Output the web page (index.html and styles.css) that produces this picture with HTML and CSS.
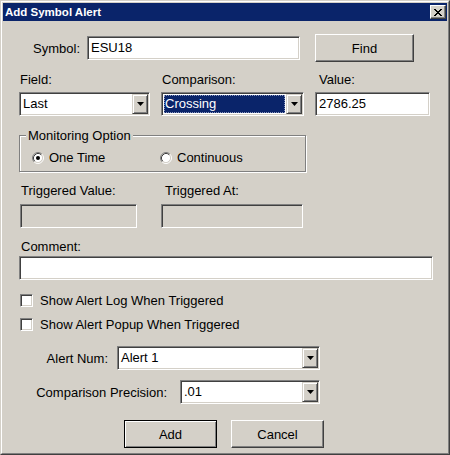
FILE: index.html
```html
<!DOCTYPE html>
<html>
<head>
<meta charset="utf-8">
<link rel="stylesheet" href="styles.css">
</head>
<body>
<div class="window">
  <div class="frame">
    <div class="titlebar">
      <span class="title">Add Symbol Alert</span>
      <span class="close"><svg width="8" height="7" viewBox="0 0 8 7" shape-rendering="crispEdges"><path d="M0 0h2v1H0zM6 0h2v1H6zM1 1h2v1H1zM5 1h2v1H5zM2 2h4v1H2zM3 3h2v1H3zM2 4h4v1H2zM1 5h2v1H1zM5 5h2v1H5zM0 6h2v1H0zM6 6h2v1H6z" fill="#000"/></svg></span>
    </div>
    <div class="content">
      <div class="row sym-row">
        <span class="lbl sym-lbl">Symbol:</span>
        <div class="edit sym-edit">ESU18</div>
        <div class="btn find">Find</div>
      </div>

      <div class="grid3">
        <span class="cap c1">Field:</span>
        <span class="cap c1">Comparison:</span>
        <span class="cap c4">Value:</span>
        <div class="combo"><span class="val">Last</span><span class="drop"><svg width="7" height="4" viewBox="0 0 7 4"><path d="M0 0h7L3.5 4z" fill="#000"/></svg></span></div>
        <div class="combo"><span class="val sel">Crossing</span><span class="drop"><svg width="7" height="4" viewBox="0 0 7 4"><path d="M0 0h7L3.5 4z" fill="#000"/></svg></span></div>
        <div class="edit">2786.25</div>
      </div>

      <fieldset class="group">
        <legend>Monitoring Option</legend>
        <div class="radios">
          <span class="radio first"><svg width="12" height="12" viewBox="0 0 12 12"><circle cx="6" cy="6" r="4.5" fill="#fff"/><path d="M2.11 9.89A5.5 5.5 0 0 1 9.89 2.11" stroke="#808080" fill="none"/><path d="M9.89 2.11A5.5 5.5 0 0 1 2.11 9.89" stroke="#fff" fill="none"/><path d="M2.82 9.18A4.5 4.5 0 0 1 9.18 2.82" stroke="#404040" fill="none"/><path d="M9.18 2.82A4.5 4.5 0 0 1 2.82 9.18" stroke="#d4d0c8" fill="none"/><circle cx="6" cy="6" r="2" fill="#000"/></svg>One Time</span>
          <span class="radio"><svg width="12" height="12" viewBox="0 0 12 12"><circle cx="6" cy="6" r="4.5" fill="#fff"/><path d="M2.11 9.89A5.5 5.5 0 0 1 9.89 2.11" stroke="#808080" fill="none"/><path d="M9.89 2.11A5.5 5.5 0 0 1 2.11 9.89" stroke="#fff" fill="none"/><path d="M2.82 9.18A4.5 4.5 0 0 1 9.18 2.82" stroke="#404040" fill="none"/><path d="M9.18 2.82A4.5 4.5 0 0 1 2.82 9.18" stroke="#d4d0c8" fill="none"/></svg>Continuous</span>
        </div>
      </fieldset>

      <div class="grid2">
        <span class="cap c1">Triggered Value:</span>
        <span class="cap c4">Triggered At:</span>
        <div class="edit disabled"></div>
        <div class="edit disabled"></div>
      </div>

      <span class="cap comment-cap">Comment:</span>
      <div class="edit comment"></div>

      <div class="check first-check"><span class="box"></span>Show Alert Log When Triggered</div>
      <div class="check second-check"><span class="box"></span>Show Alert Popup When Triggered</div>

      <div class="row alert-row">
        <span class="lbl alert-lbl">Alert Num:</span>
        <div class="combo alert-combo"><span class="val">Alert 1</span><span class="drop"><svg width="7" height="4" viewBox="0 0 7 4"><path d="M0 0h7L3.5 4z" fill="#000"/></svg></span></div>
      </div>
      <div class="row prec-row">
        <span class="lbl prec-lbl">Comparison Precision:</span>
        <div class="combo prec-combo"><span class="val">.01</span><span class="drop"><svg width="7" height="4" viewBox="0 0 7 4"><path d="M0 0h7L3.5 4z" fill="#000"/></svg></span></div>
      </div>

      <div class="row buttons">
        <div class="btn default">Add</div>
        <div class="btn">Cancel</div>
      </div>
    </div>
  </div>
</div>
</body>
</html>
```

FILE: styles.css
```css
html, body {
  margin: 0;
  padding: 0;
  background: #d4d0c8;
}
body {
  font-family: "Liberation Sans", Arial, sans-serif;
  font-size: 13px;
  color: #000;
}
.window {
  width: 450px;
  height: 455px;
  box-sizing: border-box;
  border: 1px solid;
  border-color: #d4d0c8 #404040 #404040 #d4d0c8;
  background: #d4d0c8;
}
.frame {
  height: 100%;
  box-sizing: border-box;
  border: 1px solid;
  border-color: #fff #808080 #808080 #fff;
  padding: 1px;
}
.titlebar {
  height: 18px;
  background: #0a246a;
  display: flex;
  align-items: center;
  justify-content: space-between;
  padding-left: 2px;
}
.title {
  color: #fff;
  font-weight: bold;
  font-size: 11.5px;
  line-height: 18px;
}
.close {
  width: 16px;
  height: 14px;
  box-sizing: border-box;
  margin-right: 1px;
  background: #d4d0c8;
  border: 1px solid;
  border-color: #fff #404040 #404040 #fff;
  box-shadow: inset -1px -1px 0 #808080;
  display: flex;
  align-items: center;
  justify-content: center;
  padding-left: 0;
}
.close svg { display: block; margin-left: -1px; }
.content {
  padding-left: 16px;
}
.row {
  display: flex;
  align-items: center;
}
.lbl {
  line-height: 15px;
  text-align: right;
  flex: none;
}
.cap {
  display: block;
  line-height: 15px;
  white-space: nowrap;
}
.c1 { padding-left: 1px; }
.c4 { padding-left: 4px; }

.edit {
  box-sizing: border-box;
  height: 24px;
  background: #fff;
  border: 1px solid;
  border-color: #808080 #fff #fff #808080;
  box-shadow: inset 1px 1px 0 #404040, inset -1px -1px 0 #d4d0c8;
  padding: 0 3px;
  line-height: 22px;
  white-space: nowrap;
}
.edit.disabled { background: #d4d0c8; }

.btn {
  box-sizing: border-box;
  height: 28px;
  border: 1px solid;
  border-color: #fff #404040 #404040 #fff;
  box-shadow: inset -1px -1px 0 #808080;
  display: flex;
  align-items: center;
  justify-content: center;
  width: 93px;
}
.btn.default {
  border-color: #000;
  box-shadow: inset 1px 1px 0 #fff, inset -1px -1px 0 #808080;
}

/* symbol row */
.sym-row { margin-top: 13px; height: 28px; }
.sym-lbl { width: 61px; margin-right: 7px; }
.sym-edit { width: 213px; margin-right: 15px; }
.find { width: 99px; }

/* field / comparison / value */
.grid3 {
  margin-top: 10px;
  display: grid;
  grid-template-columns: 131px 143px 115px;
  column-gap: 11px;
  row-gap: 5px;
}
.combo {
  box-sizing: border-box;
  height: 24px;
  background: #fff;
  border: 1px solid;
  border-color: #808080 #fff #fff #808080;
  box-shadow: inset 1px 1px 0 #404040, inset -1px -1px 0 #d4d0c8;
  padding: 1px;
  display: flex;
}
.combo .val {
  flex: 1;
  line-height: 20px;
  padding-left: 2px;
  white-space: nowrap;
}
.combo .val.sel {
  margin: 1px;
  padding-left: 1px;
  line-height: 18px;
  background: #0a246a;
  color: #fff;
  outline: 1px dotted #8a96bc;
  outline-offset: -1px;
}
.drop {
  flex: none;
  width: 16px;
  box-sizing: border-box;
  background: #d4d0c8;
  border: 1px solid;
  border-color: #d4d0c8 #404040 #404040 #d4d0c8;
  box-shadow: inset 1px 1px 0 #fff, inset -1px -1px 0 #808080;
  display: flex;
  align-items: center;
  justify-content: center;
}
.drop svg { display: block; margin-left: 1px; }

/* group */
.group {
  margin: 12px 0 0 0;
  width: 287px;
  box-sizing: border-box;
  border: 1px solid #808080;
  box-shadow: 1px 1px 0 #fff, inset 1px 1px 0 #fff;
  padding: 7px 0 6px 12px;
  min-inline-size: 0;
}
.group legend {
  padding: 0 2px;
  margin-left: -6px;
  line-height: 15px;
  background: #d4d0c8;
}
.radios {
  display: flex;
  height: 15px;
  align-items: center;
}
.radio {
  display: flex;
  align-items: center;
  gap: 5px;
  line-height: 15px;
}
.radio svg { display: block; flex: none; }
.radio.first { width: 128px; }

/* triggered */
.grid2 {
  margin-top: 11px;
  padding-left: 1px;
  display: grid;
  grid-template-columns: 117px 142px;
  column-gap: 24px;
  row-gap: 6px;
}

.comment-cap { margin-top: 11px; padding-left: 2px; }
.comment { margin-top: 2px; width: 414px; }

.check {
  display: flex;
  align-items: center;
  height: 15px;
  line-height: 15px;
  padding-left: 1px;
}
.check .box {
  width: 13px;
  height: 13px;
  box-sizing: border-box;
  background: #fff;
  border: 1px solid;
  border-color: #808080 #fff #fff #808080;
  box-shadow: inset 1px 1px 0 #404040, inset -1px -1px 0 #d4d0c8;
  margin-right: 7px;
  flex: none;
}
.first-check { margin-top: 13px; }
.second-check { margin-top: 9px; }

.alert-row { margin-top: 14px; }
.alert-lbl { width: 89px; margin-right: 9px; }
.alert-combo { width: 203px; }
.prec-row { margin-top: 10px; }
.prec-lbl { width: 148px; margin-right: 13px; }
.prec-combo { width: 140px; }

.buttons {
  margin-top: 16px;
  padding-left: 105px;
  gap: 14px;
}
```
